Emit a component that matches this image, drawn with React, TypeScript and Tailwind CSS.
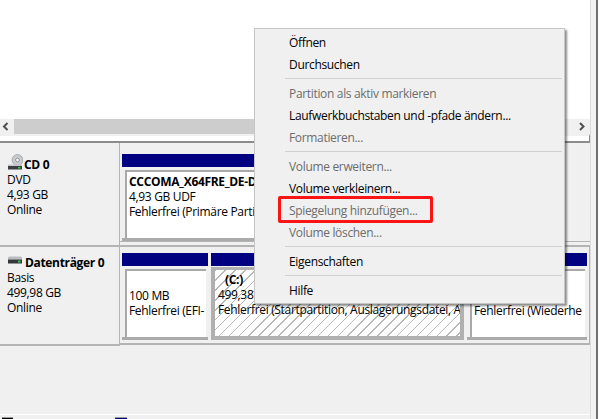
import React from "react";

const font = { fontFamily: '"Open Sans","Noto Sans",sans-serif' };

function DriveIcon({ disc }: { disc?: boolean }) {
  if (disc) {
    return (
      <svg width="15" height="16" viewBox="0 0 15 16" className="shrink-0 -mt-[6px]">
        <circle cx="9.5" cy="6" r="5.4" fill="#c9ccce" stroke="#9a9ea2" strokeWidth="0.8" />
        <circle cx="9.5" cy="6" r="1.9" fill="#f4f4f4" stroke="#7f8387" strokeWidth="0.8" />
        <rect x="0" y="10.5" width="14" height="1.6" fill="#c6c8ca" />
        <rect x="0" y="12" width="14" height="3.5" fill="#3c3f42" />
        <rect x="10" y="13" width="2.5" height="1.5" fill="#38c24a" />
      </svg>
    );
  }
  return (
    <svg width="15" height="9" viewBox="0 0 15 9" className="shrink-0 -mt-[4px]">
      <rect x="1" y="0" width="12" height="1" fill="#d4d6d8" />
      <rect x="0" y="1" width="14" height="2.5" fill="#b9bcbe" />
      <rect x="0" y="3.5" width="14" height="4" fill="#33363a" />
      <rect x="10" y="4.5" width="2.5" height="2" fill="#38c24a" />
    </svg>
  );
}

function Partition({
  width,
  title,
  lines,
  selected,
}: {
  width: string;
  title?: string;
  lines: string[];
  selected?: boolean;
}) {
  return (
    <div className={`${width} shrink-0 flex flex-col`}>
      <div className="h-[13px] bg-[#000080]" />
      {selected ? (
        <div className="mt-px h-[73px] border-[4px] border-t-[3px] border-[#b0b0b0] bg-[repeating-linear-gradient(135deg,#b8b8b8_0,#b8b8b8_1px,#ffffff_1px,#ffffff_7px)] overflow-hidden pl-[3px] pt-[2px] whitespace-nowrap text-[12px] leading-[15px] tracking-[-0.33px] text-black">
          <div className="font-bold pl-[7px] h-[15px]">{title}</div>
          {lines.map((l) => (
            <div key={l}>{l}</div>
          ))}
        </div>
      ) : (
        <div className="h-[74px] border-b-[3px] border-[#ababab] pt-[3px] pl-[3px] pr-[2px]">
          <div className="h-[68px] border-t-2 border-l-2 border-[#a9a9a9] bg-white overflow-hidden pl-[2px] pt-[2px] whitespace-nowrap text-[12px] leading-[15px] tracking-[-0.33px] text-black">
            {title ? <div className="font-bold">{title}</div> : <div className="h-[15px]" />}
            {lines.map((l, i) => (l ? <div key={i}>{l}</div> : <div key={i} className="h-[15px]" />))}
          </div>
        </div>
      )}
    </div>
  );
}

function Item({ label, off }: { label: string; off?: boolean }) {
  return (
    <div className={`h-[22px] pl-[34px] pt-[2px] flex items-center whitespace-nowrap text-[12px] tracking-[-0.33px] ${off ? "text-[#6d6d6d]" : "text-black"}`}>
      {label}
    </div>
  );
}

function Sep() {
  return (
    <div className="h-[7px] pl-[30px] pr-[2px] flex items-center">
      <div className="h-px w-full bg-[#d0d0d0]" />
    </div>
  );
}

function DiskLabel({ name, lines, disc }: { name: string; lines: string[]; disc?: boolean }) {
  return (
    <div className="pl-[7px] text-[12px] leading-[15px] tracking-[-0.33px] text-black whitespace-nowrap">
      <div className={`flex items-center h-[15px] pl-px ${disc ? "gap-px" : "gap-[2px]"}`}>
        <DriveIcon disc={disc} />
        <span className="font-bold">{name}</span>
      </div>
      {lines.map((l) => (
        <div key={l}>{l}</div>
      ))}
    </div>
  );
}

export default function App() {
  return (
    <div className="relative w-[606px] h-[419px] bg-white overflow-hidden" style={font}>
      <div className="w-[598px] h-full border-r-2 border-[#6f6f6f] flex">
        <div className="w-[591px] h-full flex flex-col border-r border-[#dcdcdc]">
          <div className="h-[119px] shrink-0 bg-white" />
          <div className="h-[15px] shrink-0 flex items-center bg-[#f0f0f0]">
            <svg width="14" height="15" viewBox="0 0 14 15" className="shrink-0">
              <path d="M7.5 4 L4 7.5 L7.5 11" fill="none" stroke="#505050" strokeWidth="2" />
            </svg>
            <div className="w-[300px] h-full bg-[#cdcdcd]" />
            <div className="flex-1" />
            <svg width="14" height="15" viewBox="0 0 14 15" className="mr-px">
              <path d="M5 4 L8.5 7.5 L5 11" fill="none" stroke="#505050" strokeWidth="2" />
            </svg>
          </div>
          <div className="h-[7px] shrink-0 bg-white border-t-2 border-r border-t-[#f0f0f0] border-r-[#888888]" />
          <div className="h-[2px] shrink-0 bg-[#8c8c8c]" />
          <div className="flex-1 bg-[#f0f0f0] flex flex-col">
            <div className="h-[104px] shrink-0 flex">
              <div className="w-[120px] shrink-0 border-r border-b-2 border-[#b4b4b4] pt-[14px]">
                <DiskLabel name="CD 0" disc lines={["DVD", "4,93 GB", "Online"]} />
              </div>
              <div className="flex-1 flex flex-col pt-[11px] pl-[2px]">
                <div className="flex flex-1">
                  <Partition
                    width="w-[200px]"
                    title="CCCOMA_X64FRE_DE-D"
                    lines={["4,93 GB UDF", "Fehlerfrei (Primäre Partit"]}
                  />
                </div>
                <div className="h-[6px] -ml-[2px] border-t border-b-2 border-[#b4b4b4]" />
              </div>
            </div>
            <div className="h-[99px] shrink-0 flex">
              <div className="w-[120px] shrink-0 border-r border-b-2 border-[#b4b4b4] pt-[8px]">
                <DiskLabel name="Datenträger 0" lines={["Basis", "499,98 GB", "Online"]} />
              </div>
              <div className="flex-1 pl-[2px] pt-[6px] border-b-2 border-r border-[#b4b4b4] h-[98px]">
                <div className="flex gap-[3px]">
                  <Partition width="w-[86px]" lines={["100 MB", "Fehlerfrei (EFI-"]} />
                  <Partition
                    width="w-[253px]"
                    title="(C:)"
                    lines={["499,38", "Fehlerfrei (Startpartition, Auslagerungsdatei, A"]}
                    selected
                  />
                  <Partition width="w-[120px]" lines={["", "Fehlerfrei (Wiederhe"]} />
                </div>
              </div>
            </div>
            <div className="flex-1" />
            <div className="h-[5px] shrink-0 border-t border-white flex gap-[102px] pl-[2px]">
              <div className="mt-[2px] w-[11px] h-[3px] bg-black border-t border-[#999999]" />
              <div className="mt-[2px] w-[12px] h-[3px] bg-[#000080] border-t border-[#999999]" />
            </div>
          </div>
        </div>
        <div className="flex-1 bg-[#f2f2f2]" />
      </div>

      {/* context menu over the page */}
      <div className="absolute left-[254px] top-[28px] w-[311px] h-[276px] bg-[#f0f0f0] border border-[#c6c6c6] pt-[2px] shadow-[2px_2px_2px_rgba(0,0,0,0.45)]">
        <Item label="Öffnen" />
        <Item label="Durchsuchen" />
        <Sep />
        <Item label="Partition als aktiv markieren" off />
        <Item label="Laufwerkbuchstaben und -pfade ändern..." />
        <Item label="Formatieren..." off />
        <Sep />
        <Item label="Volume erweitern..." off />
        <Item label="Volume verkleinern..." />
        <Item label="Spiegelung hinzufügen..." off />
        <Item label="Volume löschen..." off />
        <Sep />
        <Item label="Eigenschaften" />
        <Sep />
        <Item label="Hilfe" />
      </div>

      {/* red annotation */}
      <div className="absolute left-[278px] top-[196px] w-[155px] h-[27px] border-[3px] border-[#fb1414] rounded-[2px]" />
    </div>
  );
}
